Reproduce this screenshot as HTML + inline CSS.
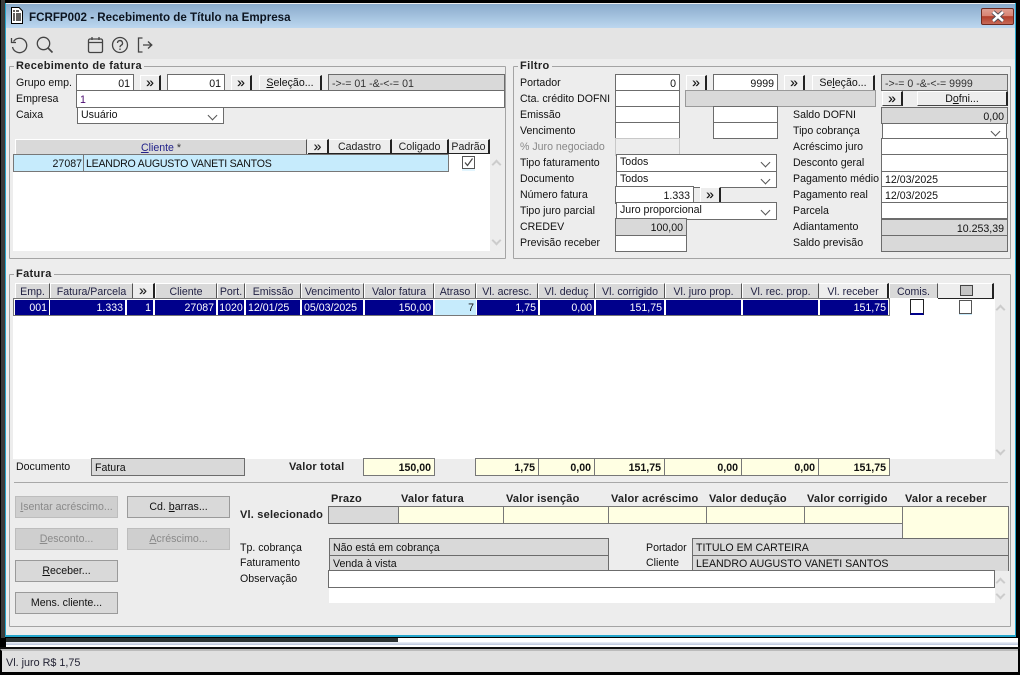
<!DOCTYPE html>
<html><head><meta charset="utf-8"><style>
html,body{margin:0;padding:0;width:1020px;height:675px;overflow:hidden;background:#000}
*{box-sizing:border-box}
body{font:10.6px/14px "Liberation Sans",sans-serif;color:#111;position:relative}
div,span.a{position:absolute;white-space:nowrap}
.l{height:14px;margin-top:1px}
.f,.g,.y,.d{border:1px solid #6c6c6c;background:#fff;padding:2px 3px 0 3px;overflow:hidden}
.g{background:#d9d9d9}.y{background:#ffffe3;border-color:#777;font-weight:bold;text-align:right}
.d{border-color:#c8c8c8;background:#ededed}
.r{text-align:right}
.b{background:#ededed;border-top:1px solid #fff;border-left:1px solid #fff;border-right:2px solid #222;border-bottom:1px solid #444;text-align:center;padding-top:0;line-height:14px}
.m{font-size:14px;line-height:12px;color:#111;-webkit-text-stroke:.2px #111}
.h{background:#d9d9d9;border-top:1px solid #fff;border-left:1px solid #fff;border-right:1px solid #555;text-align:center;line-height:14px;color:#333;padding-top:1px}
.h2{background:#ededed;border-top:1px solid #fff;border-right:2px solid #222;border-bottom:1px solid #222;text-align:center;color:#222;line-height:14px;padding-top:0}
.s::after{content:"";position:absolute;right:7px;top:4px;width:6px;height:6px;border-right:1px solid #555;border-bottom:1px solid #555;transform:rotate(45deg)}
.s{border:1px solid #6c6c6c;background:#fff;padding:0 3px}
.p{background:#d9d9d9;border:1px solid #9a9a9a;text-align:center;line-height:21px}
.pd{background:#cfcfcf;border:1px solid #bdbdbd;color:#8a8a8a;text-align:center;line-height:21px}
.c{background:#00008b;color:#fff;text-align:right;padding:1px 2px 0 2px;top:300px;height:15px}
.gb{border:1px solid #a4a4a4;border-radius:1px}
.lg{background:#ededed;padding:0 2px;font-weight:bold;font-size:11px;color:#222;letter-spacing:.35px}
.bh{font-weight:bold;color:#222;font-size:11px;letter-spacing:.2px;margin-top:1px}
.up,.dn{width:7px;height:7px;border-left:2px solid #ccc;border-top:2px solid #ccc;transform:rotate(45deg)}
.dn{transform:rotate(225deg)}
</style></head><body>
<div style="left:1px;top:0;width:4px;height:640px;background:#3c3c3c"></div>
<div style="left:5px;top:3px;width:1011px;height:634px;background:#ededed;border-left:1px solid #25a6cc;border-right:1px solid #25a6cc;border-bottom:2px solid #25a6cc"></div>

<div style="left:6px;top:4px;width:1009px;height:24px;background:linear-gradient(#8aabcc,#bcd7ef)"></div>
<svg style="position:absolute;left:10px;top:7px" width="14" height="17"><path d="M1.500 .5H9L12.500 4V16.500H1.500Z" fill="#fff" stroke="#000"/><path d="M3 4h2M6 4h3M3 7h2M6 7h5M3 9h2M6 9h5M3 11h2M6 11h5M3 13h2M6 13h5" stroke="#000" stroke-width="1.200"/></svg>
<div style="left:29px;top:10px;font-weight:bold;font-size:11.600px;line-height:15px;color:#0c1420">FCRFP002 - Recebimento de Título na Empresa</div>
<div style="left:981px;top:8px;width:33px;height:17px;background:linear-gradient(#df9d90 0,#d98474 45%,#b13d2a 50%,#c86a58 100%);border:1px solid #6e2a20;border-radius:2px"></div>
<svg style="position:absolute;left:990px;top:10px" width="16" height="13"><path d="M3 2L13 11M13 2L3 11" stroke="#4a4a55" stroke-width="4.500"/><path d="M3 2L13 11M13 2L3 11" stroke="#fff" stroke-width="2.600"/></svg>
<div style="left:6px;top:28px;width:1009px;height:31px;background:#e4e4e4"></div>

<svg style="position:absolute;left:8px;top:34px" width="150" height="22" fill="none" stroke="#444" stroke-width="1.300">
<path d="M5.500 7.500A7.200 7.200 0 1 1 4.500 13"/><path d="M3.500 4V8.500H8"/>
<circle cx="35.500" cy="9.500" r="6.200"/><path d="M40 14L44.500 18.500" stroke-width="1.600"/>
<rect x="80.500" y="5" width="14" height="13.500" rx="1.500"/><path d="M80.500 8.500H94.500M84 3V6M91 3V6"/>
<circle cx="112" cy="11" r="7.500"/><path d="M109.500 9a2.500 2.500 0 1 1 3.600 2.300c-.9.500-1.100 1-1.100 2"/><path d="M112 14.500V16"/>
<path d="M134.500 4H130.500V18H134.500M135 11H143.500M140 7.500L143.800 11L140 14.500"/>
</svg>

<!-- Recebimento -->
<div class="gb" style="left:9px;top:66px;width:497px;height:193px"></div>
<div class="lg" style="left:14px;top:59px">Recebimento de fatura</div>
<div class="l" style="left:16px;top:75px">Grupo emp.</div>
<div class="l" style="left:16px;top:91px">Empresa</div>
<div class="l" style="left:16px;top:107px">Caixa</div>
<div class="f r" style="left:76px;top:74px;width:58px;height:17px">01</div>
<div class="b m" style="left:140px;top:75px;width:21px;height:16px">»</div>
<div class="f r" style="left:167px;top:74px;width:58px;height:17px">01</div>
<div class="b m" style="left:231px;top:75px;width:21px;height:16px">»</div>
<div class="b" style="left:259px;top:75px;width:63px;height:16px"><u>S</u>eleção...</div>
<div class="g" style="left:328px;top:74px;width:177px;height:17px;color:#333">-&gt;-= 01 -&amp;-&lt;-= 01</div>
<div class="f" style="left:76px;top:90px;width:429px;height:18px;color:#4a0a70;padding-top:2px">1</div>
<div class="s" style="left:77px;top:107px;width:147px;height:17px">Usuário</div>

<div style="left:13px;top:154px;width:477px;height:97px;background:#fff"></div>
<div class="h" style="left:15px;top:139px;width:292px;height:15px"><u style="color:#22228a">C</u><span style="color:#22228a">liente</span> *</div>
<div class="h2 m" style="left:308px;top:139px;width:21px;height:15px;line-height:12px">»</div>
<div class="h2" style="left:329px;top:139px;width:63px;height:15px">Cadastro</div>
<div class="h2" style="left:392px;top:139px;width:57px;height:15px">Coligado</div>
<div class="h2" style="left:449px;top:139px;width:41px;height:15px">Padrão</div>
<div style="left:13px;top:154px;width:436px;height:18px;border:1px solid #777;background:#c6ebfc"></div>
<div class="r" style="left:14px;top:157px;width:68px;padding-right:0">27087</div>
<div style="left:83px;top:155px;width:1px;height:16px;background:#777"></div>
<div style="left:86px;top:157px;letter-spacing:-.24px">LEANDRO AUGUSTO VANETI SANTOS</div>
<svg style="position:absolute;left:462px;top:156px" width="14" height="15"><rect x=".5" y=".5" width="12" height="12" fill="#fff" stroke="#555"/><path d="M3 6.500L5.500 9.500L10.500 2.500" fill="none" stroke="#444" stroke-width="1.200"/><path d="M0 14H13" stroke="#c6ebfc"/></svg>
<div class="up" style="left:493px;top:161px"></div>
<div class="dn" style="left:493px;top:237px"></div>

<!-- Filtro -->
<div class="gb" style="left:513px;top:66px;width:498px;height:193px"></div>
<div class="lg" style="left:518px;top:59px">Filtro</div>
<div class="l" style="left:520px;top:75px">Portador</div>
<div class="l" style="left:520px;top:91px">Cta. crédito DOFNI</div>
<div class="l" style="left:520px;top:107px">Emissão</div>
<div class="l" style="left:520px;top:123px">Vencimento</div>
<div class="l" style="left:520px;top:139px;color:#888">% Juro negociado</div>
<div class="l" style="left:520px;top:155px">Tipo faturamento</div>
<div class="l" style="left:520px;top:171px">Documento</div>
<div class="l" style="left:520px;top:187px">Número fatura</div>
<div class="l" style="left:520px;top:203px">Tipo juro parcial</div>
<div class="l" style="left:520px;top:219px">CREDEV</div>
<div class="l" style="left:520px;top:235px">Previsão receber</div>
<div class="f r" style="left:615px;top:74px;width:65px;height:17px">0</div>
<div class="b m" style="left:686px;top:75px;width:21px;height:16px">»</div>
<div class="f r" style="left:713px;top:74px;width:65px;height:17px">9999</div>
<div class="b m" style="left:784px;top:75px;width:21px;height:16px">»</div>
<div class="b" style="left:812px;top:75px;width:63px;height:16px">Se<u>l</u>eção...</div>
<div class="g" style="left:881px;top:74px;width:127px;height:17px;color:#333">-&gt;-= 0 -&amp;-&lt;-= 9999</div>
<div class="f" style="left:615px;top:90px;width:65px;height:17px"></div>
<div class="g" style="left:685px;top:90px;width:191px;height:17px;border-color:#999"></div>
<div class="b m" style="left:882px;top:91px;width:21px;height:15px">»</div>
<div class="b" style="left:917px;top:91px;width:91px;height:15px">D<u>o</u>fni...</div>
<div class="f" style="left:615px;top:106px;width:65px;height:17px"></div>
<div class="f" style="left:713px;top:106px;width:65px;height:17px"></div>
<div class="f" style="left:615px;top:122px;width:65px;height:17px"></div>
<div class="f" style="left:713px;top:122px;width:65px;height:17px"></div>
<div class="d" style="left:615px;top:138px;width:65px;height:18px"></div>
<div class="s" style="left:616px;top:154px;width:161px;height:18px">Todos</div>
<div class="s" style="left:616px;top:171px;width:161px;height:17px">Todos</div>
<div class="f r" style="left:615px;top:186px;width:79px;height:18px">1.333</div>
<div class="b m" style="left:700px;top:187px;width:21px;height:16px">»</div>
<div class="s" style="left:616px;top:202px;width:161px;height:18px">Juro proporcional</div>
<div class="g r" style="left:615px;top:218px;width:72px;height:18px">100,00</div>
<div class="f" style="left:615px;top:235px;width:72px;height:17px"></div>

<div class="l" style="left:793px;top:107px">Saldo DOFNI</div>
<div class="l" style="left:793px;top:123px">Tipo cobrança</div>
<div class="l" style="left:793px;top:139px">Acréscimo juro</div>
<div class="l" style="left:793px;top:155px">Desconto geral</div>
<div class="l" style="left:793px;top:171px">Pagamento médio</div>
<div class="l" style="left:793px;top:187px">Pagamento real</div>
<div class="l" style="left:793px;top:203px">Parcela</div>
<div class="l" style="left:793px;top:219px">Adiantamento</div>
<div class="l" style="left:793px;top:235px">Saldo previsão</div>
<div class="g r" style="left:881px;top:107px;width:127px;height:17px">0,00</div>
<div class="s" style="left:882px;top:123px;width:125px;height:16px"></div>
<div class="f" style="left:881px;top:138px;width:127px;height:17px"></div>
<div class="f" style="left:881px;top:154px;width:127px;height:18px"></div>
<div class="f" style="left:881px;top:171px;width:127px;height:16px;padding-top:1px">12/03/2025</div>
<div class="f" style="left:881px;top:186px;width:127px;height:17px;padding-top:2px">12/03/2025</div>
<div class="f" style="left:881px;top:202px;width:127px;height:17px"></div>
<div class="g r" style="left:881px;top:219px;width:127px;height:17px">10.253,39</div>
<div class="g" style="left:881px;top:235px;width:127px;height:17px"></div>

<!-- Fatura -->
<div class="gb" style="left:9px;top:274px;width:1002px;height:353px"></div>
<div class="lg" style="left:14px;top:267px">Fatura</div>
<div style="left:13px;top:298px;width:982px;height:161px;background:#fff"></div>
<div class="h" style="left:15px;top:283px;width:35px;height:15px;color:#224">Emp.</div>
<div class="h" style="left:50px;top:283px;width:83px;height:15px;color:#224">Fatura/Parcela</div>
<div class="h2 m" style="left:133px;top:283px;width:22px;height:15px;line-height:12px;border-bottom:0">»</div>
<div class="h" style="left:155px;top:283px;width:62px;height:15px;color:#224">Cliente</div>
<div class="h" style="left:217px;top:283px;width:28px;height:15px;color:#224">Port.</div>
<div class="h" style="left:245px;top:283px;width:56px;height:15px;color:#224">Emissão</div>
<div class="h" style="left:301px;top:283px;width:63px;height:15px;color:#224">Vencimento</div>
<div class="h" style="left:364px;top:283px;width:70px;height:15px;color:#224">Valor fatura</div>
<div class="h" style="left:434px;top:283px;width:42px;height:15px;color:#224">Atraso</div>
<div class="h" style="left:476px;top:283px;width:62px;height:15px;color:#224">Vl. acresc.</div>
<div class="h" style="left:538px;top:283px;width:57px;height:15px;color:#224">Vl. deduç</div>
<div class="h" style="left:595px;top:283px;width:70px;height:15px;color:#224">Vl. corrigido</div>
<div class="h" style="left:665px;top:283px;width:77px;height:15px;color:#224">Vl. juro prop.</div>
<div class="h" style="left:742px;top:283px;width:77px;height:15px;color:#224">Vl. rec. prop.</div>
<div class="h2" style="left:819px;top:283px;width:70px;height:15px;color:#224;border-bottom:0;padding-top:1px">Vl. receber</div>
<div class="h" style="left:889px;top:283px;width:49px;height:15px;color:#224">Comis.</div>
<div class="h2" style="left:938px;top:283px;width:56px;height:16px"></div>
<div style="left:960px;top:285px;width:13px;height:11px;background:#c4c4c4;border:1px solid #444"></div>

<div style="left:13px;top:298px;width:877px;height:18px;background:#fff;border:1px solid #777"></div>
<div class="c" style="left:15px;width:34px">001</div>
<div class="c" style="left:50px;width:75px">1.333</div>
<div class="c" style="left:127px;width:26px">1</div>
<div class="c" style="left:155px;width:61px">27087</div>
<div class="c" style="left:218px;width:26px;padding:1px 0 0 0;text-align:center">1020</div>
<div class="c" style="left:246px;width:54px;text-align:left">12/01/25</div>
<div class="c" style="left:302px;width:61px;text-align:left">05/03/2025</div>
<div class="c" style="left:365px;width:68px">150,00</div>
<div class="c" style="left:435px;width:41px;background:#c6ebfc;color:#111">7</div>
<div class="c" style="left:477px;width:61px">1,75</div>
<div class="c" style="left:540px;width:54px">0,00</div>
<div class="c" style="left:596px;width:68px">151,75</div>
<div class="c" style="left:666px;width:75px"></div>
<div class="c" style="left:743px;width:75px"></div>
<div class="c" style="left:820px;width:68px">151,75</div>
<div style="left:910px;top:299px;width:14px;height:16px;border:1px solid #222;border-bottom:2px solid #00008b;background:#fff"></div>
<div style="left:959px;top:300px;width:13px;height:14px;border:1px solid #555;background:#fff;box-shadow:0 1px 0 #c6ebfc"></div>
<div class="up" style="left:997px;top:306px"></div>
<div class="dn" style="left:997px;top:447px"></div>

<div class="l" style="left:16px;top:459px">Documento</div>
<div class="g" style="left:91px;top:458px;width:154px;height:18px;padding-top:2px">Fatura</div>
<div class="bh" style="left:289px;top:459px">Valor total</div>
<div class="y" style="left:363px;top:458px;width:72px;height:18px;padding-top:2px">150,00</div>
<div class="y" style="left:475px;top:458px;width:64px;height:18px;padding-top:2px">1,75</div>
<div class="y" style="left:538px;top:458px;width:57px;height:18px;padding-top:2px">0,00</div>
<div class="y" style="left:594px;top:458px;width:71px;height:18px;padding-top:2px">151,75</div>
<div class="y" style="left:664px;top:458px;width:78px;height:18px;padding-top:2px">0,00</div>
<div class="y" style="left:741px;top:458px;width:78px;height:18px;padding-top:2px">0,00</div>
<div class="y" style="left:818px;top:458px;width:72px;height:18px;padding-top:2px">151,75</div>
<div style="left:14px;top:482px;width:994px;height:1px;background:#a8a8a8"></div>

<div class="pd" style="left:15px;top:496px;width:103px;height:22px"><u>I</u>sentar acréscimo...</div>
<div class="p" style="left:127px;top:496px;width:103px;height:22px">Cd. <u>b</u>arras...</div>
<div class="pd" style="left:15px;top:528px;width:103px;height:22px"><u>D</u>esconto...</div>
<div class="pd" style="left:127px;top:528px;width:103px;height:22px"><u>A</u>créscimo...</div>
<div class="p" style="left:15px;top:560px;width:103px;height:22px"><u>R</u>eceber...</div>
<div class="p" style="left:15px;top:592px;width:103px;height:22px">Mens. cliente...</div>

<div class="bh" style="left:240px;top:507px">Vl. selecionado</div>
<div class="bh" style="left:331px;top:491px">Prazo</div>
<div class="bh" style="left:401px;top:491px">Valor fatura</div>
<div class="bh" style="left:506px;top:491px">Valor isenção</div>
<div class="bh" style="left:611px;top:491px">Valor acréscimo</div>
<div class="bh" style="left:709px;top:491px">Valor dedução</div>
<div class="bh" style="left:807px;top:491px">Valor corrigido</div>
<div class="bh" style="left:905px;top:491px">Valor a receber</div>
<div class="g" style="left:328px;top:506px;width:71px;height:18px"></div>
<div class="y" style="left:398px;top:506px;width:106px;height:18px"></div>
<div class="y" style="left:503px;top:506px;width:106px;height:18px"></div>
<div class="y" style="left:608px;top:506px;width:99px;height:18px"></div>
<div class="y" style="left:706px;top:506px;width:99px;height:18px"></div>
<div class="y" style="left:804px;top:506px;width:99px;height:18px"></div>
<div class="y" style="left:902px;top:506px;width:107px;height:33px"></div>

<div class="l" style="left:240px;top:540px">Tp. cobrança</div>
<div class="l" style="left:240px;top:555px">Faturamento</div>
<div class="l" style="left:240px;top:571px">Observação</div>
<div class="l" style="left:646px;top:540px">Portador</div>
<div class="l" style="left:646px;top:555px">Cliente</div>
<div class="g" style="left:329px;top:538px;width:280px;height:18px;padding-top:2px">Não está em cobrança</div>
<div class="g" style="left:329px;top:555px;width:280px;height:16px;padding-top:1px;border-bottom:0">Venda à vista</div>
<div class="g" style="left:692px;top:538px;width:317px;height:18px;padding-top:2px">TITULO EM CARTEIRA</div>
<div class="g" style="left:692px;top:555px;width:317px;height:16px;padding-top:1px;border-bottom:0">LEANDRO AUGUSTO VANETI SANTOS</div>
<div class="f" style="left:328px;top:570px;width:667px;height:18px"></div>
<div style="left:329px;top:588px;width:666px;height:15px;background:#fff"></div>
<div class="up" style="left:997px;top:579px"></div>
<div class="dn" style="left:997px;top:591px"></div>

<!-- bottom -->
<div style="left:0;top:638px;width:1018px;height:9px;background:#fff"></div>
<div style="left:6px;top:638px;width:392px;height:4px;background:#2b3232"></div>
<div style="left:6px;top:642px;width:1012px;height:3px;background:linear-gradient(#eef1f8,#b9c4dc)"></div>
<div style="left:0;top:638px;width:6px;height:9px;background:#000"></div>
<div style="left:0;top:647px;width:1020px;height:2px;background:#111"></div>
<div style="left:0;top:649px;width:1018px;height:23px;background:#e0e0e0;border-top:2px solid #bbb;border-left:2px solid #000"></div>
<div style="left:6px;top:656px;color:#223;font-size:10.800px">Vl. juro R$ 1,75</div>
</body></html>
